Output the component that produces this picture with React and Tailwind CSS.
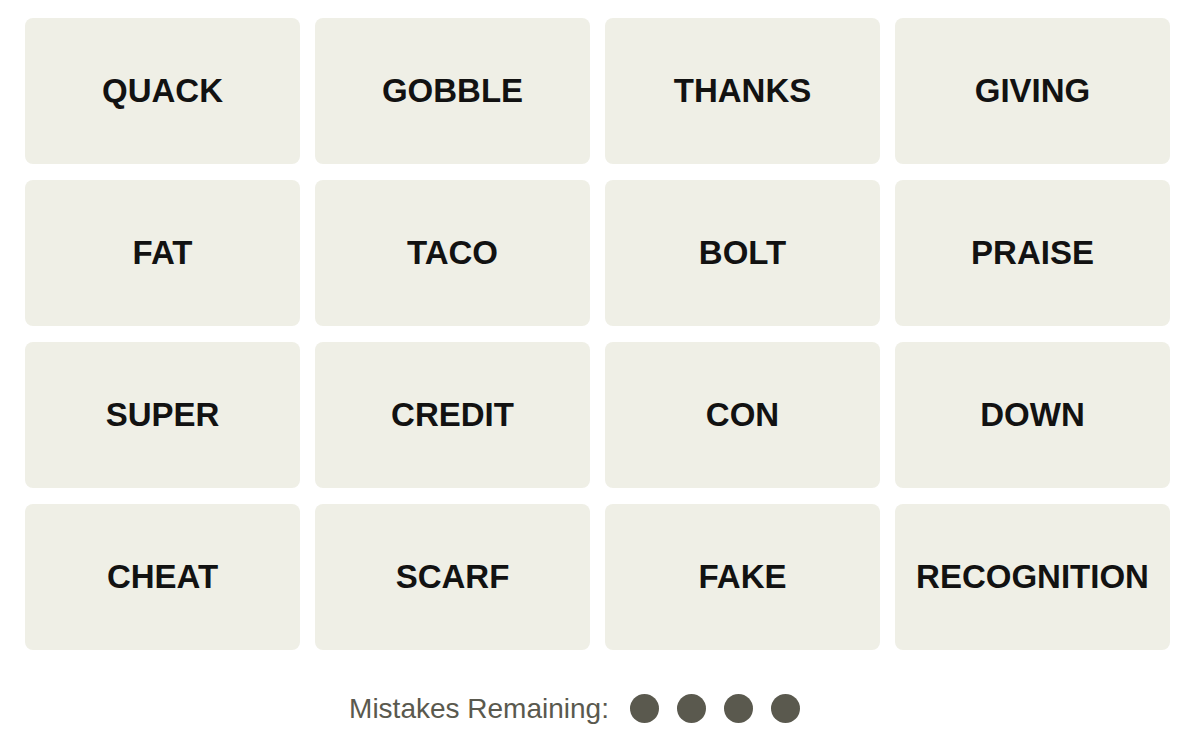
const words = [
  'QUACK', 'GOBBLE', 'THANKS', 'GIVING',
  'FAT', 'TACO', 'BOLT', 'PRAISE',
  'SUPER', 'CREDIT', 'CON', 'DOWN',
  'CHEAT', 'SCARF', 'FAKE', 'RECOGNITION',
];

export default function App() {
  return (
    <div
      className="w-[1201px] h-[750px] bg-white overflow-hidden"
      style={{ fontFamily: '"Liberation Sans", Arial, sans-serif' }}
    >
      {/* Word grid */}
      <div className="grid grid-cols-[repeat(4,275px)] gap-x-[15px] gap-y-[16px] pl-[25px] pt-[18px]">
        {words.map((word) => (
          <div
            key={word}
            className="h-[146px] rounded-[8px] bg-[#efefe6] flex items-center justify-center"
          >
            <span className="text-[33px] font-bold text-[#121212]">{word}</span>
          </div>
        ))}
      </div>

      {/* Mistakes remaining */}
      <div className="flex items-center justify-center pr-[52px] mt-[44px]">
        <span className="text-[28px] text-[#5a594e] leading-none">Mistakes Remaining:</span>
        <div className="flex items-center gap-[18px] ml-[21px]">
          {[0, 1, 2, 3].map((i) => (
            <span key={i} className="block w-[29px] h-[29px] rounded-full bg-[#5a594e]" />
          ))}
        </div>
      </div>
    </div>
  );
}
